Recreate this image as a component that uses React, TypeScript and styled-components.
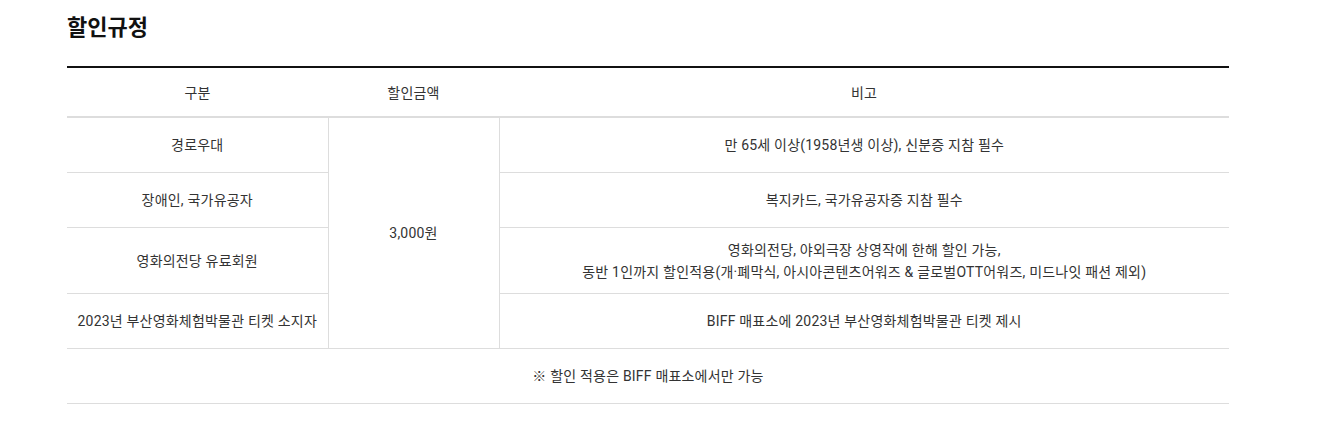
import React from "react"
import styled, { createGlobalStyle } from "styled-components"

const GlobalStyle = createGlobalStyle`
  body {
    margin: 0;
    background: #fff;
    font-family: Roboto, "Noto Sans CJK KR", sans-serif;
    color: #222;
  }
`

const Wrap = styled.section`
  width: 1162px;
  padding: 12px 0 0 67px;
`

const Title = styled.h3`
  margin: 0 0 22px;
  font-size: 22px;
  line-height: 32px;
  font-weight: 700;
  color: #111;
`

const Table = styled.table`
  width: 100%;
  border-collapse: collapse;
  border-top: 2px solid #111;
  table-layout: fixed;
  font-size: 14px;
  letter-spacing: 0.2px;
  color: #333;
`

const HeadCell = styled.th`
  height: 48px;
  padding: 0;
  font-weight: 400;
  text-align: center;
  border-bottom: 2px solid #ddd;
`

const Cell = styled.td<{ $tall?: boolean }>`
  height: ${(p) => (p.$tall ? "45px" : "34px")};
  padding: 10px 8px;
  line-height: 22px;
  text-align: center;
  vertical-align: middle;
  border-bottom: 1px solid #ddd;
  & + & {
    border-left: 1px solid #ddd;
  }
`

const PriceCell = styled(Cell)`
  border-left: 1px solid #ddd;
  border-right: 1px solid #ddd;
`

const rows = [
  { kind: "경로우대", note: ["만 65세 이상(1958년생 이상), 신분증 지참 필수"] },
  { kind: "장애인, 국가유공자", note: ["복지카드, 국가유공자증 지참 필수"] },
  {
    kind: "영화의전당 유료회원",
    note: [
      "영화의전당, 야외극장 상영작에 한해 할인 가능,",
      "동반 1인까지 할인적용(개·폐막식, 아시아콘텐츠어워즈 & 글로벌OTT어워즈, 미드나잇 패션 제외)",
    ],
  },
  { kind: "2023년 부산영화체험박물관 티켓 소지자", note: ["BIFF 매표소에 2023년 부산영화체험박물관 티켓 제시"] },
]

export default function App() {
  return (
    <>
      <GlobalStyle />
      <Wrap>
        <Title>할인규정</Title>
        <Table>
          <colgroup>
            <col style={{ width: 261 }} />
            <col style={{ width: 171 }} />
            <col />
          </colgroup>
          <thead>
            <tr>
              <HeadCell>구분</HeadCell>
              <HeadCell>할인금액</HeadCell>
              <HeadCell>비고</HeadCell>
            </tr>
          </thead>
          <tbody>
            {rows.map((r, i) => (
              <tr key={r.kind}>
                <Cell $tall={r.note.length > 1}>{r.kind}</Cell>
                {i === 0 && <PriceCell rowSpan={rows.length}>3,000원</PriceCell>}
                <Cell $tall={r.note.length > 1}>
                  {r.note.map((line, j) => (
                    <React.Fragment key={j}>
                      {j > 0 && <br />}
                      {line}
                    </React.Fragment>
                  ))}
                </Cell>
              </tr>
            ))}
            <tr>
              <Cell colSpan={3}>※ 할인 적용은 BIFF 매표소에서만 가능</Cell>
            </tr>
          </tbody>
        </Table>
      </Wrap>
    </>
  )
}
